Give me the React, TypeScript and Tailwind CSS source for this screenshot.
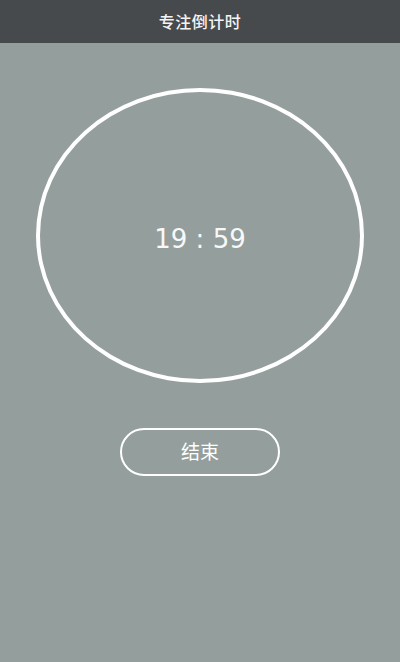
import React from "react";

export default function App() {
  return (
    <div
      className="w-[400px] h-[662px] flex flex-col bg-[#949f9d] overflow-hidden"
      style={{ fontFamily: '"Noto Sans", "Noto Sans CJK SC", sans-serif' }}
    >
      <div className="h-[43px] shrink-0 bg-[#474a4d] flex items-center justify-center">
        <span className="text-[16px] font-medium text-[#f4f4f4] tracking-[0.5px]">专注倒计时</span>
      </div>
      <div className="flex flex-col items-center pt-[45px]">
        <div className="w-[328px] h-[295px] rounded-[50%] border-4 border-white flex items-center justify-center">
          <span
            className="text-[26px] text-[#f8f8f8] mt-[7px]"
            style={{ fontFamily: '"DejaVu Sans", sans-serif' }}
          >
            19 : 59
          </span>
        </div>
        <button className="mt-[45px] w-[160px] h-[48px] rounded-full border-2 border-white flex items-center justify-center text-white text-[19px]">
          结束
        </button>
      </div>
    </div>
  );
}
